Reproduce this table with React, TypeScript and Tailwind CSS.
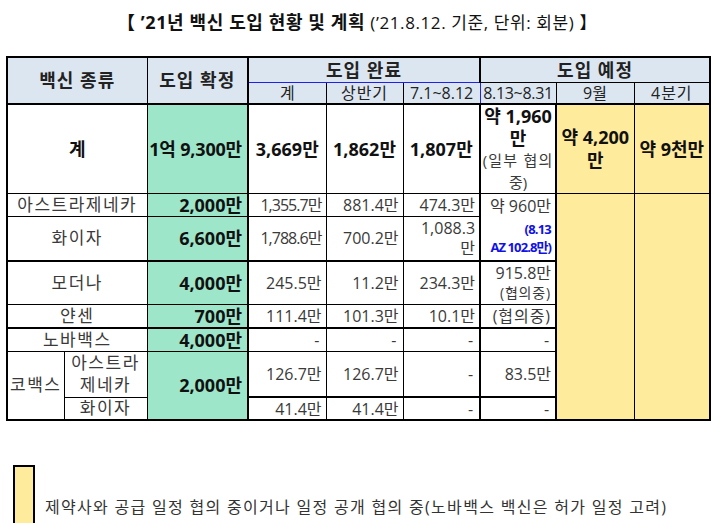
const FONT = "font-[family-name:'Open_Sans','Noto_Sans_CJK_KR',sans-serif]"

const cell = "border border-black p-0"
const head = `${cell} bg-[#dce6f1] text-center text-[#222] leading-[20px]`
const green = `${cell} bg-[#9ee6c9] border-r-2 text-right pr-[5px] font-bold text-[18px] leading-[20px] text-[#111]`
const num = `${cell} text-right pr-[4px] text-[16px] leading-[20px] text-[#3a3a3a]`
const name = `${cell} text-center text-[17px] leading-[20px] tracking-[1.5px] text-[#3a3a3a]`
const yellow = `${cell} bg-[#ffeb9c]`
const big = `${cell} text-center text-[18px] leading-[20px] font-bold text-[#111]`

export default function App() {
  return (
    <div className={`${FONT} w-[714px] h-[523px] bg-white overflow-hidden`}>
      <div className="h-[56px] pt-[10px] text-center leading-[24px] text-[#111]">
        <span className="text-[18px] font-bold tracking-[0.6px]">【 ’21년 백신 도입 현황 및 계획 </span>
        <span className="text-[17px] tracking-[0.6px]">(’21.8.12. 기준, 단위: 회분) 】</span>
      </div>

      <table className="ml-[6px] w-[703px] table-fixed border-collapse border-2 border-black">
        <colgroup>
          <col className="w-[57px]" />
          <col className="w-[83px]" />
          <col className="w-[101px]" />
          <col className="w-[78px]" />
          <col className="w-[77px]" />
          <col className="w-[77px]" />
          <col className="w-[76px]" />
          <col className="w-[78px]" />
          <col className="w-[76px]" />
        </colgroup>
        <tbody>
          <tr className="h-[25px]">
            <td colSpan={2} rowSpan={2} className={`${head} border-b-2 text-[18px] font-bold tracking-[1px]`}>백신 종류</td>
            <td rowSpan={2} className={`${head} border-b-2 border-r-2 text-[18px] font-bold tracking-[1px]`}>도입 확정</td>
            <td colSpan={3} className={`${head} border-b-[#1f1ff0] border-r-2 text-[18px] font-bold tracking-[1px]`}>도입 완료</td>
            <td colSpan={3} className={`${head} text-[18px] font-bold tracking-[1px]`}>도입 예정</td>
          </tr>
          <tr className="h-[21px] text-[16px]">
            <td className={`${head} border-t-[#1f1ff0] border-b-2`}>계</td>
            <td className={`${head} border-t-[#1f1ff0] border-b-2 tracking-[1px]`}>상반기</td>
            <td className={`${head} border-t-[#1f1ff0] border-r-[#1f1ff0] border-b-2`}>7.1~8.12</td>
            <td className={`${head} border-l-[#1f1ff0] border-b-2 tracking-[-0.02em]`}>8.13~8.31</td>
            <td className={`${head} border-b-2`}>9월</td>
            <td className={`${head} border-b-2 tracking-[1px]`}>4분기</td>
          </tr>

          <tr className="h-[88px]">
            <td colSpan={2} className={big}>계</td>
            <td className={`${green} text-center pr-0 tracking-[-0.01em]`}>1억 9,300만</td>
            <td className={big}>3,669만</td>
            <td className={big}>1,862만</td>
            <td className={`${big} border-r-2`}>1,807만</td>
            <td className={`${cell} border-r-2 text-center text-[#111]`}>
              <div className="text-[18px] leading-[22px] font-bold">약 1,960</div>
              <div className="text-[18px] leading-[22px] font-bold">만</div>
              <div className="text-[15px] leading-[22px] text-[#3a3a3a] tracking-[0.08em]">(일부 협의</div>
              <div className="text-[15px] leading-[22px] text-[#3a3a3a]">중)</div>
            </td>
            <td className={`${yellow} border-l-2 text-center text-[18px] font-bold text-[#111]`}>
              <div className="leading-[23px]">약 4,200</div>
              <div className="leading-[23px]">만</div>
            </td>
            <td className={`${yellow} text-center text-[18px] leading-[20px] font-bold text-[#111]`}>약 9천만</td>
          </tr>

          <tr className="h-[23px]">
            <td colSpan={2} className={name}>아스트라제네카</td>
            <td className={green}>2,000만</td>
            <td className={`${num} pr-[3px] tracking-[-0.06em]`}>1,355.7만</td>
            <td className={num}>881.4만</td>
            <td className={`${num} border-r-2`}>474.3만</td>
            <td rowSpan={2} className={`${num} border-r-2 border-b-2 align-top pt-[2px] pr-[2px]`}>
              <div className="h-[24px] leading-[20px] text-[16px]">약 960만</div>
              <div className="text-[13px] leading-[18px] font-bold text-[#1010e8] tracking-[-0.06em]">(8.13</div>
              <div className="text-[13px] leading-[18px] font-bold text-[#1010e8] tracking-[-0.07em]">AZ 102.8만)</div>
            </td>
            <td rowSpan={7} className={`${yellow} border-l-2`}></td>
            <td rowSpan={7} className={yellow}></td>
          </tr>

          <tr className="h-[45px]">
            <td colSpan={2} className={`${name} border-b-2`}>화이자</td>
            <td className={`${green} border-b-2`}>6,600만</td>
            <td className={`${num} border-b-2 pr-[3px] tracking-[-0.06em]`}>1,788.6만</td>
            <td className={`${num} border-b-2`}>700.2만</td>
            <td className={`${num} border-b-2 border-r-2`}>
              <div className="leading-[20px]">1,088.3</div>
              <div className="leading-[20px]">만</div>
            </td>
          </tr>

          <tr className="h-[43px]">
            <td colSpan={2} className={`${name} tracking-[0.12em]`}>모더나</td>
            <td className={green}>4,000만</td>
            <td className={num}>245.5만</td>
            <td className={num}>11.2만</td>
            <td className={`${num} border-r-2`}>234.3만</td>
            <td className={`${num} border-r-2`}>
              <div className="leading-[21px]">915.8만</div>
              <div className="leading-[18px] text-[14px] tracking-[0.06em]">(협의중)</div>
            </td>
          </tr>

          <tr className="h-[24px]">
            <td colSpan={2} className={`${name} border-b-2`}>얀센</td>
            <td className={`${green} border-b-2`}>700만</td>
            <td className={`${num} border-b-2`}>111.4만</td>
            <td className={`${num} border-b-2`}>101.3만</td>
            <td className={`${num} border-b-2 border-r-2`}>10.1만</td>
            <td className={`${num} border-b-2 border-r-2 text-[15px] tracking-[0.06em]`}>(협의중)</td>
          </tr>

          <tr className="h-[23px]">
            <td colSpan={2} className={name}>노바백스</td>
            <td className={green}>4,000만</td>
            <td className={`${num} pr-[6px]`}>-</td>
            <td className={`${num} pr-[6px]`}>-</td>
            <td className={`${num} border-r-2 pr-[6px]`}>-</td>
            <td className={`${num} border-r-2 pr-[6px]`}>-</td>
          </tr>

          <tr className="h-[46px]">
            <td rowSpan={2} className={`${name} text-[16px] tracking-[0px]`}>코백스</td>
            <td className={name}>
              <div className="leading-[22px]">아스트라</div>
              <div className="leading-[22px]">제네카</div>
            </td>
            <td rowSpan={2} className={green}>2,000만</td>
            <td className={`${num} border-b-2`}>126.7만</td>
            <td className={`${num} border-b-2`}>126.7만</td>
            <td className={`${num} border-b-2 border-r-2 pr-[6px]`}>-</td>
            <td className={`${num} border-b-2 border-r-2`}>83.5만</td>
          </tr>

          <tr className="h-[23px]">
            <td className={name}>화이자</td>
            <td className={num}>41.4만</td>
            <td className={num}>41.4만</td>
            <td className={`${num} border-r-2 pr-[6px]`}>-</td>
            <td className={`${num} border-r-2 pr-[6px]`}>-</td>
          </tr>
        </tbody>
      </table>

      <div className="mt-[44px] ml-[13px] flex items-start">
        <div className="w-[22px] h-[70px] bg-[#ffeb9c] border-2 border-b-0 border-black" />
        <p className="ml-[10px] mt-[32px] text-[16px] leading-[20px] tracking-[1.3px] text-[#333] whitespace-nowrap">
          제약사와 공급 일정 협의 중이거나 일정 공개 협의 중(노바백스 백신은 허가 일정 고려)
        </p>
      </div>
    </div>
  )
}
